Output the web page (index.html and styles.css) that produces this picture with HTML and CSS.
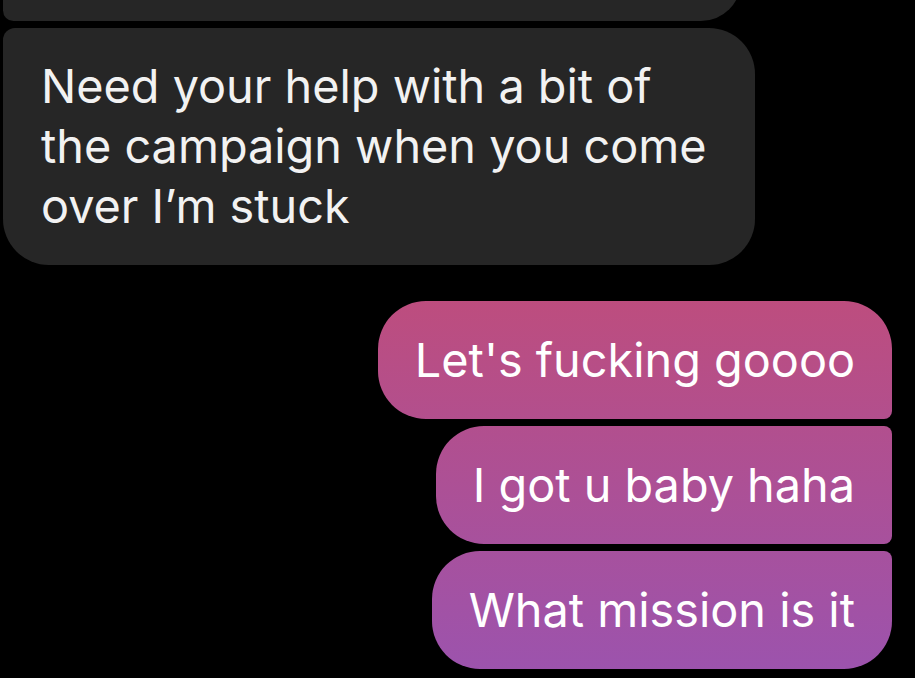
FILE: index.html
```html
<!DOCTYPE html>
<html lang="en">
<head>
<meta charset="utf-8">
<title>Chat</title>
<link rel="stylesheet" href="styles.css">
</head>
<body>
<div class="thread">
  <div class="bubble in in-first partial"></div>
  <div class="bubble in in-last">Need your help with a bit of the campaign when you come over I’m stuck</div>
  <div class="bubble out out-first">Let's fucking goooo</div>
  <div class="bubble out out-mid">I got u baby haha</div>
  <div class="bubble out out-last">What mission is it</div>
</div>
</body>
</html>
```
FILE: styles.css
```css
html, body {
  margin: 0;
  padding: 0;
  background: #000;
}
body {
  font-family: Inter, Roboto, "Noto Sans", sans-serif;
  color: #fff;
  overflow: hidden;
}
.thread {
  display: flex;
  flex-direction: column;
  gap: 7px;
  margin-top: -59px;
}
.bubble {
  box-sizing: border-box;
  font-size: 46.8px;
  line-height: 60px;
  padding: 29px 37px;
}
.in {
  align-self: flex-start;
  margin-left: 3px;
  background: #262626;
  color: #f2f2f2;
}
.partial {
  width: 738px;
  height: 80px;
  border-radius: 46px 46px 46px 12px;
}
.in-last {
  width: 752px;
  padding: 28px 36px 29px 38px;
  border-radius: 12px 46px 46px 46px;
}
.out {
  align-self: flex-end;
  margin-right: 23px;
  background: linear-gradient(180deg, #bd4d7e 0px, #bd4d7e 300px, #9c53ad 670px) fixed;
  color: #fff;
}
.thread .out-first {
  margin-top: 29px;
  border-radius: 48px 48px 8px 48px;
}
.out-mid {
  border-radius: 48px 8px 8px 48px;
}
.out-last {
  border-radius: 48px 8px 48px 48px;
}
```
